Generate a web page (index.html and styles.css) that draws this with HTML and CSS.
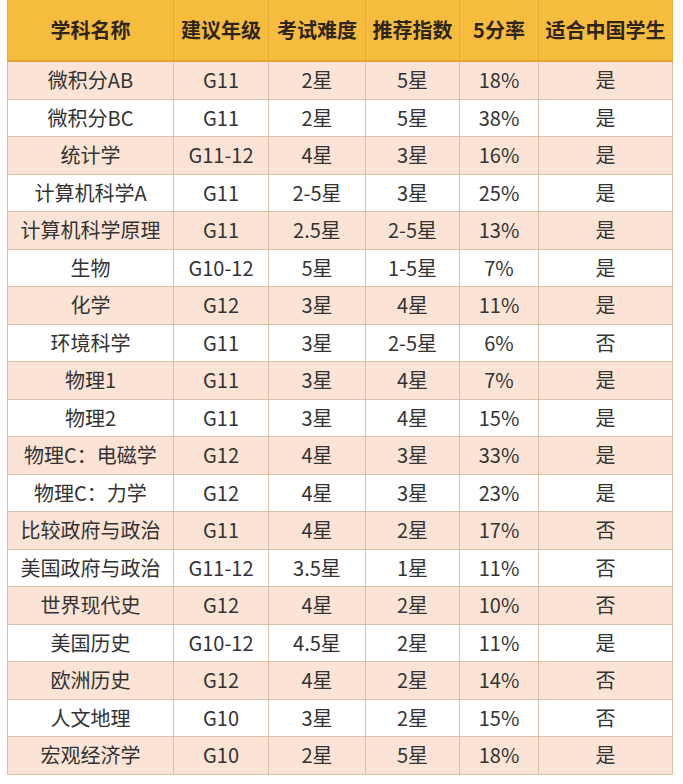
FILE: index.html
```html
<!DOCTYPE html>
<html lang="zh">
<head>
<meta charset="utf-8">
<link rel="stylesheet" href="styles.css">
</head>
<body>
<table class="ap">
<colgroup>
<col class="c1"><col class="c2"><col class="c3"><col class="c4"><col class="c5"><col class="c6">
</colgroup>
<thead>
<tr><th>学科名称</th><th>建议年级</th><th>考试难度</th><th>推荐指数</th><th>5分率</th><th>适合中国学生</th></tr>
</thead>
<tbody>
<tr><td>微积分AB</td><td>G11</td><td>2星</td><td>5星</td><td>18%</td><td>是</td></tr>
<tr><td>微积分BC</td><td>G11</td><td>2星</td><td>5星</td><td>38%</td><td>是</td></tr>
<tr><td>统计学</td><td>G11-12</td><td>4星</td><td>3星</td><td>16%</td><td>是</td></tr>
<tr><td>计算机科学A</td><td>G11</td><td>2-5星</td><td>3星</td><td>25%</td><td>是</td></tr>
<tr><td>计算机科学原理</td><td>G11</td><td>2.5星</td><td>2-5星</td><td>13%</td><td>是</td></tr>
<tr><td>生物</td><td>G10-12</td><td>5星</td><td>1-5星</td><td>7%</td><td>是</td></tr>
<tr><td>化学</td><td>G12</td><td>3星</td><td>4星</td><td>11%</td><td>是</td></tr>
<tr><td>环境科学</td><td>G11</td><td>3星</td><td>2-5星</td><td>6%</td><td>否</td></tr>
<tr><td>物理1</td><td>G11</td><td>3星</td><td>4星</td><td>7%</td><td>是</td></tr>
<tr><td>物理2</td><td>G11</td><td>3星</td><td>4星</td><td>15%</td><td>是</td></tr>
<tr><td>物理C：电磁学</td><td>G12</td><td>4星</td><td>3星</td><td>33%</td><td>是</td></tr>
<tr><td>物理C：力学</td><td>G12</td><td>4星</td><td>3星</td><td>23%</td><td>是</td></tr>
<tr><td>比较政府与政治</td><td>G11</td><td>4星</td><td>2星</td><td>17%</td><td>否</td></tr>
<tr><td>美国政府与政治</td><td>G11-12</td><td>3.5星</td><td>1星</td><td>11%</td><td>否</td></tr>
<tr><td>世界现代史</td><td>G12</td><td>4星</td><td>2星</td><td>10%</td><td>否</td></tr>
<tr><td>美国历史</td><td>G10-12</td><td>4.5星</td><td>2星</td><td>11%</td><td>是</td></tr>
<tr><td>欧洲历史</td><td>G12</td><td>4星</td><td>2星</td><td>14%</td><td>否</td></tr>
<tr><td>人文地理</td><td>G10</td><td>3星</td><td>2星</td><td>15%</td><td>否</td></tr>
<tr><td>宏观经济学</td><td>G10</td><td>2星</td><td>5星</td><td>18%</td><td>是</td></tr>
</tbody>
</table>
</body>
</html>
```

FILE: styles.css
```css
html, body {
  margin: 0;
  padding: 0;
  background: #ffffff;
}
body {
  padding-left: 7px;
  font-family: "Noto Sans CJK SC", "Noto Sans", sans-serif;
}
.ap {
  border-collapse: collapse;
  table-layout: fixed;
  width: 665px;
  color: #333333;
}
.c1 { width: 166px; }
.c2 { width: 95px; }
.c3 { width: 97px; }
.c4 { width: 94px; }
.c5 { width: 79px; }
.c6 { width: 134px; }
.ap th {
  background: #f6bc3d;
  color: #2e2418;
  font-weight: 700;
  font-size: 20px;
  height: 60px;
  padding: 0;
  border-left: 1px solid #e9ad38;
  border-right: 1px solid #e9ad38;
  border-bottom: 2px solid #e2a433;
  line-height: 1;
}
.ap td {
  font-size: 20px;
  text-align: center;
  height: 36.5px;
  padding: 0;
  border: 1px solid #dcc1a9;
  line-height: 1;
}
.ap tbody tr:nth-child(odd) td {
  background: #fbe4d6;
}
.ap tbody tr:nth-child(even) td {
  background: #ffffff;
}
```
